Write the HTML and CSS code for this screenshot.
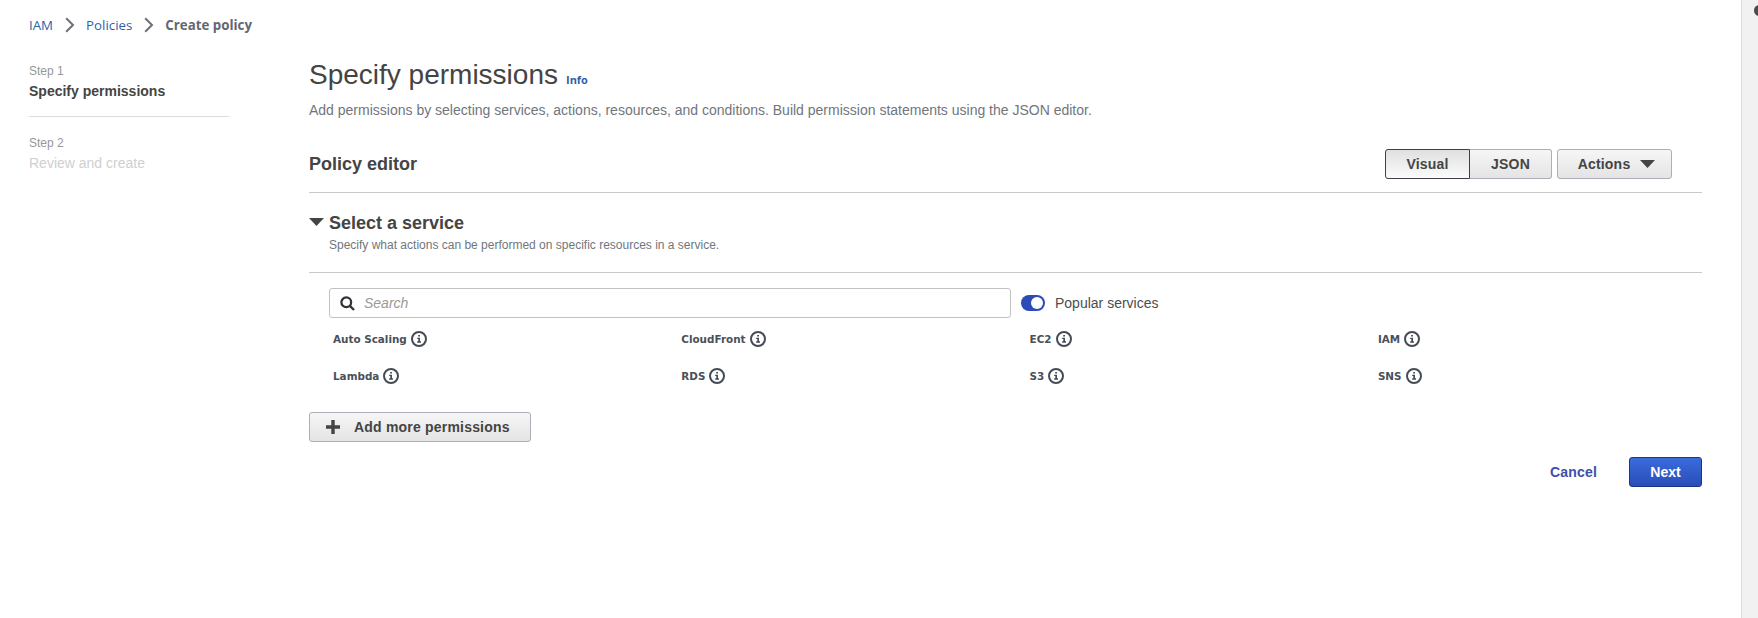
FILE: index.html
```html
<!DOCTYPE html>
<html lang="en">
<head>
<meta charset="utf-8">
<title>Create policy</title>
<link rel="stylesheet" href="styles.css">
</head>
<body>
<div class="page">
  <div class="content">
    <nav class="crumbs">
      <a class="crumb-link">IAM</a>
      <svg class="chev" viewBox="0 0 10 16"><path d="M1.200 1.200 8 8l-6.800 6.800"/></svg>
      <a class="crumb-link">Policies</a>
      <svg class="chev" viewBox="0 0 10 16"><path d="M1.200 1.200 8 8l-6.800 6.800"/></svg>
      <span class="crumb-current">Create policy</span>
    </nav>
    <div class="layout">
      <aside class="steps">
        <div class="step step-first">
          <div class="step-num">Step 1</div>
          <div class="step-name active">Specify permissions</div>
        </div>
        <div class="step">
          <div class="step-num">Step 2</div>
          <div class="step-name">Review and create</div>
        </div>
      </aside>
      <main class="main">
        <div class="title-row">
          <h1 class="title">Specify permissions</h1>
          <a class="info">Info</a>
        </div>
        <p class="subtitle">Add permissions by selecting services, actions, resources, and conditions. Build permission statements using the JSON editor.</p>
        <div class="editor-head">
          <h2 class="editor-title">Policy editor</h2>
          <div class="editor-actions">
            <div class="segmented">
              <button class="btn seg seg-on">Visual</button>
              <button class="btn seg seg-off">JSON</button>
            </div>
            <button class="btn actions">Actions<svg class="caret" viewBox="0 0 15 8"><path d="M0 0h15L7.500 8z"/></svg></button>
          </div>
        </div>
        <section class="service-head">
          <svg class="caret service-caret" viewBox="0 0 15 8"><path d="M0 0h15L7.500 8z"/></svg>
          <div>
            <h3 class="service-title">Select a service</h3>
            <p class="service-sub">Specify what actions can be performed on specific resources in a service.</p>
          </div>
        </section>
        <div class="service-body">
          <div class="search-row">
            <div class="search">
              <svg class="search-icon" viewBox="0 0 16 16"><circle cx="6.700" cy="6.700" r="5.200"/><path d="m10.500 10.500 4.500 4.500"/></svg>
              <span class="placeholder">Search</span>
            </div>
            <span class="toggle"><span class="knob"></span></span>
            <span class="toggle-label">Popular services</span>
          </div>
          <div class="services">
            <div class="svc">Auto Scaling<svg class="i" viewBox="0 0 16 16"><use href="#info"/></svg></div>
            <div class="svc">CloudFront<svg class="i" viewBox="0 0 16 16"><use href="#info"/></svg></div>
            <div class="svc">EC2<svg class="i" viewBox="0 0 16 16"><use href="#info"/></svg></div>
            <div class="svc">IAM<svg class="i" viewBox="0 0 16 16"><use href="#info"/></svg></div>
            <div class="svc">Lambda<svg class="i" viewBox="0 0 16 16"><use href="#info"/></svg></div>
            <div class="svc">RDS<svg class="i" viewBox="0 0 16 16"><use href="#info"/></svg></div>
            <div class="svc">S3<svg class="i" viewBox="0 0 16 16"><use href="#info"/></svg></div>
            <div class="svc">SNS<svg class="i" viewBox="0 0 16 16"><use href="#info"/></svg></div>
          </div>
        </div>
        <button class="btn add"><svg class="plus" viewBox="0 0 14 14"><path d="M5.300 0h3.400v5.300H14v3.400H8.700V14H5.300V8.700H0V5.300h5.300z"/></svg>Add more permissions</button>
        <div class="footer">
          <a class="cancel">Cancel</a>
          <button class="next">Next</button>
        </div>
      </main>
    </div>
  </div>
  <div class="rail"><span class="rail-dot"></span></div>
</div>
<svg class="defs" width="0" height="0">
  <defs>
    <g id="info">
      <circle cx="8" cy="8" r="7" fill="none" stroke="#444b55" stroke-width="2"/>
      <path d="M6.200 6.700h2.800v3.600h1v1.400H6.200v-1.400h1.100V8.100H6.200zM7.200 3.900h1.800v1.700H7.200z" fill="#444b55"/>
    </g>
  </defs>
</svg>
</body>
</html>
```
FILE: styles.css
```css
* { box-sizing: border-box; }
html, body { margin: 0; height: 100%; background: #fff; }
body { font-family: "Liberation Sans", Arial, sans-serif; color: #444; overflow: hidden; }
h1, h2, h3, p { margin: 0; font-weight: normal; }
button { font-family: inherit; cursor: pointer; }

.page { display: flex; height: 618px; }
.content { flex: 1; min-width: 0; padding-left: 29px; }
.rail { width: 17px; background: #f1f1f1; border-left: 1px solid #dcdcdc; overflow: hidden; padding: 5px 0 0 12px; }
.rail-dot { display: block; width: 11px; height: 11px; border-radius: 50%; background: #4a4a4a; }
.defs { position: absolute; }

.crumbs { display: flex; align-items: center; height: 50px; font-family: "Open Sans", sans-serif; font-size: 13.300px; }
.crumb-link { color: #2f5fa8; }
.crumb-current { color: #5f6873; font-weight: 700; }
.chev { width: 10px; height: 16px; margin: 0 11px 0 12px; fill: none; stroke: #6b6f76; stroke-width: 2; }

.layout { display: flex; }
.steps { width: 280px; flex: none; padding-top: 12px; }
.step { width: 200px; }
.step-first { height: 55px; border-bottom: 1px solid #dcdcdc; margin-bottom: 17px; }
.step-num { font-size: 12px; line-height: 18px; color: #979797; margin-bottom: 1px; }
.step-name { font-size: 14px; line-height: 20px; color: #cfcfcf; }
.step-name.active { color: #444; font-weight: 700; }

.main { width: 1393px; flex: none; }
.title-row { display: flex; align-items: baseline; height: 46px; padding-top: 6px; }
.title { font-size: 28px; line-height: 38px; color: #444; }
.info { font-family: "Open Sans", sans-serif; font-size: 11px; font-weight: 700; color: #2f5fa8; margin-left: 8px; }
.subtitle { font-size: 14px; line-height: 20px; color: #71767c; margin-top: 4px; }

.editor-head { display: flex; justify-content: space-between; align-items: center; height: 45px; margin-top: 28px; padding-right: 30px; padding-bottom: 13px; border-bottom: 1px solid #c9c9c9; }
.editor-title { font-size: 18px; font-weight: 700; line-height: 24px; }
.editor-actions { display: flex; gap: 5px; }
.segmented { display: flex; }

.btn { height: 30px; padding: 0; font-size: 14px; font-weight: 700; letter-spacing: .2px; color: #444; background: linear-gradient(#f6f6f6, #e4e4e4); border: 1px solid #aab0b5; border-radius: 2px; }
.seg { display: block; }
.seg-on { width: 85px; background: linear-gradient(#e0e0e0, #fbfbfb); border-color: #3d4148; border-radius: 3px 0 0 3px; }
.seg-off { width: 82px; border-left: 0; border-radius: 0 3px 3px 0; }
.actions { display: flex; align-items: center; justify-content: center; gap: 10px; width: 115px; padding-left: 4px; border-radius: 3px; }
.caret { width: 15px; height: 8px; fill: #444; }

.service-head { display: flex; align-items: flex-start; height: 80px; padding-top: 19px; border-bottom: 1px solid #c9c9c9; }
.service-caret { margin: 6px 5px 0 0; flex: none; }
.service-title { font-size: 18px; font-weight: 700; line-height: 22px; }
.service-sub { font-size: 12px; line-height: 16px; color: #71767c; margin-top: 3px; }

.service-body { padding-left: 20px; }
.search-row { display: flex; align-items: center; margin-top: 15px; }
.search { display: flex; align-items: center; width: 682px; height: 30px; border: 1px solid #c2c2c2; border-radius: 3px; padding-left: 10px; }
.search-icon { width: 15px; height: 15px; fill: none; stroke: #2e3338; stroke-width: 2.400; }
.placeholder { font-size: 14px; font-style: italic; color: #9a9a9a; margin-left: 9px; }
.toggle { display: flex; align-items: center; justify-content: flex-end; width: 24px; height: 16px; margin-left: 10px; padding-right: 2px; border-radius: 8px; background: #2a4bb8; }
.knob { width: 12px; height: 12px; border-radius: 50%; background: #fff; }
.toggle-label { font-size: 14px; color: #4d4d4d; margin-left: 10px; }

.services { display: grid; grid-template-columns: repeat(4, 348.300px); grid-auto-rows: 37px; padding-left: 4px; margin-top: 2px; }
.svc { display: flex; align-items: center; gap: 4px; font-family: "DejaVu Sans", sans-serif; font-size: 10.400px; font-weight: 700; color: #4a5059; }
.i { width: 16px; height: 16px; flex: none; }

.add { display: flex; align-items: center; width: 222px; height: 30px; margin-top: 18px; padding-left: 16px; border-radius: 3px; }
.plus { width: 14px; height: 14px; fill: #444; margin-right: 14px; }

.footer { display: flex; justify-content: flex-end; align-items: center; gap: 32px; margin-top: 15px; }
.cancel { font-size: 14px; font-weight: 700; letter-spacing: .2px; color: #3d4fa8; }
.next { width: 73px; height: 30px; font-size: 14px; font-weight: 700; color: #fff; border: 1px solid #1c357f; border-radius: 3px; background: linear-gradient(#3a6bdc, #2a4db8); }
```
